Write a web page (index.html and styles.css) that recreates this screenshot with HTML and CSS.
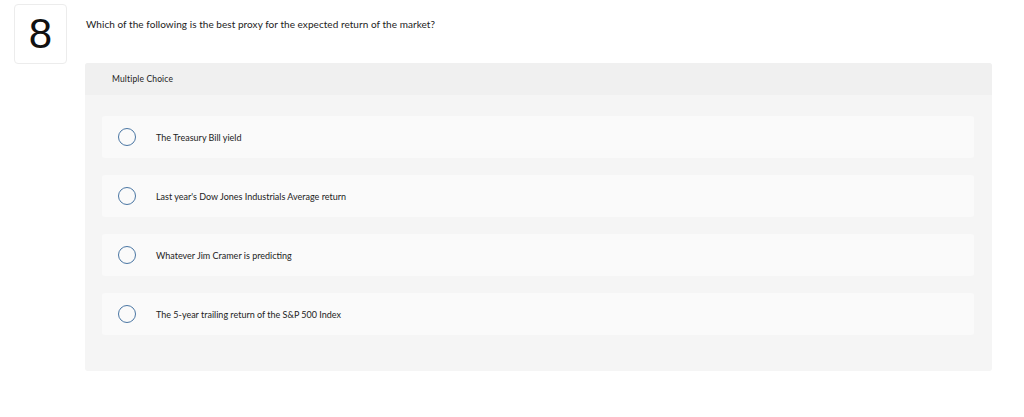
FILE: index.html
```html
<!DOCTYPE html>
<html lang="en">
<head>
    <meta charset="UTF-8">
    <title>Question 8</title>
    <link rel="stylesheet" href="styles.css">
</head>
<body>
    <div class="question">
        <div class="number">8</div>
        <div class="content">
            <p class="prompt">Which of the following is the best proxy for the expected return of the market?</p>
            <div class="panel">
                <div class="panel-header">Multiple Choice</div>
                <ul class="choices">
                    <li class="choice"><span class="radio"></span><span>The Treasury Bill yield</span></li>
                    <li class="choice"><span class="radio"></span><span>Last year's Dow Jones Industrials Average return</span></li>
                    <li class="choice"><span class="radio"></span><span>Whatever Jim Cramer is predicting</span></li>
                    <li class="choice"><span class="radio"></span><span>The 5-year trailing return of the S&amp;P 500 Index</span></li>
                </ul>
            </div>
        </div>
    </div>
</body>
</html>
```
FILE: styles.css
```css
body {
    margin: 0;
    background-color: #ffffff;
    font-family: Lato, "Liberation Sans", sans-serif;
    color: #222;
}

.question {
    display: flex;
    padding: 4px 32px 0 14px;
}

.number {
    flex: none;
    width: 51px;
    height: 58px;
    border: 1px solid #ececec;
    border-radius: 4px;
    display: flex;
    justify-content: center;
    align-items: center;
    font-family: "Liberation Sans", sans-serif;
    font-size: 42px;
    color: #111;
}

.content {
    flex: 1;
    margin-left: 18px;
}

.prompt {
    margin: 13px 0 0 1px;
    font-size: 10px;
    line-height: 14px;
    letter-spacing: 0.05px;
}

.panel {
    margin-top: 32px;
    background-color: #f5f5f5;
    border-radius: 3px;
    padding-bottom: 36px;
}

.panel-header {
    background-color: #f0f0f0;
    border-radius: 3px 3px 0 0;
    height: 32px;
    display: flex;
    align-items: center;
    padding-left: 27px;
    font-size: 8.5px;
    letter-spacing: 0.15px;
}

.choices {
    list-style: none;
    margin: 0;
    padding: 21px 18px 0 17px;
    display: flex;
    flex-direction: column;
    gap: 17px;
}

.choice {
    height: 42px;
    background-color: #fafafa;
    border-radius: 3px;
    display: flex;
    align-items: center;
    padding-left: 16px;
    font-size: 9px;
}

.radio {
    flex: none;
    width: 16px;
    height: 16px;
    border: 1px solid #4a76a3;
    border-radius: 50%;
    margin-right: 20px;
}
```
